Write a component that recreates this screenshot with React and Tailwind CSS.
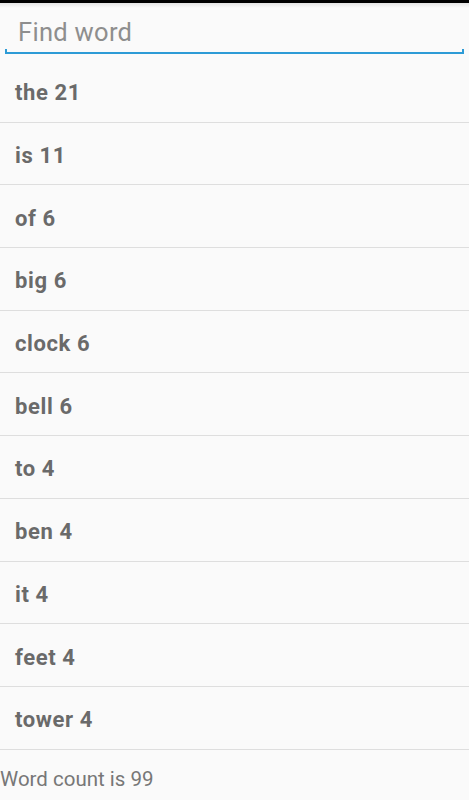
import React from 'react';

const words = [
  ['the', 21], ['is', 11], ['of', 6], ['big', 6], ['clock', 6], ['bell', 6],
  ['to', 4], ['ben', 4], ['it', 4], ['feet', 4], ['tower', 4],
];

export default function App() {
  return (
    <div className="w-[469px] h-[800px] bg-[#fafafa] overflow-hidden flex flex-col" style={{ fontFamily: 'Roboto, "Noto Sans", sans-serif' }}>
      <div className="h-[3px] bg-black shrink-0" />
      <div className="h-[5px] bg-gradient-to-b from-[#e4e4e4] to-[#fafafa] shrink-0" />
      {/* search field */}
      <div className="h-[52px] shrink-0 px-[5px] flex flex-col">
        <input
          placeholder="Find word"
          className="h-[41px] bg-transparent outline-none text-[25.5px] tracking-[0.3px] leading-none pl-[13px] pt-[7px] placeholder:text-[#8e8e8e] text-[#444]"
        />
        <div className="h-[5px] border-x-2 border-b-2 border-[#2d9bd6]" />
      </div>
      <div className="flex flex-col">
        {words.map(([w, n]) => (
          <div key={w} className="h-[62.7px] border-b border-[#dedede] flex items-center px-[15px] pt-[4px] text-[22px] tracking-[0.6px] font-bold text-[#6a6a6a]">
            {w} {n}
          </div>
        ))}
      </div>
      <div className="pt-[14px] text-[20.5px] text-[#777]">Word count is 99</div>
    </div>
  );
}
